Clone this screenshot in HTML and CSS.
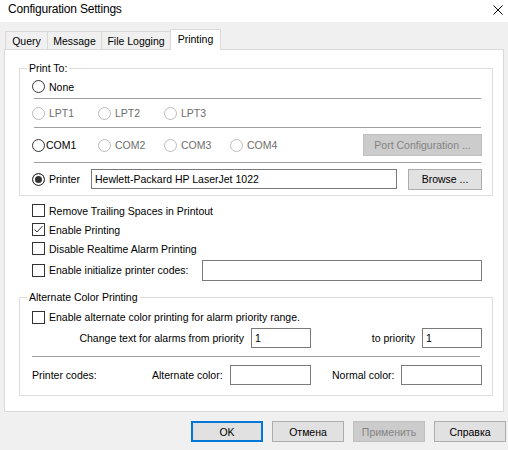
FILE: index.html
```html
<!DOCTYPE html>
<html lang="en">
<head>
  <meta charset="UTF-8">
  <meta name="viewport" content="width=device-width, initial-scale=1.0">
  <title>Configuration Settings</title>
  <link rel="stylesheet" href="styles.css">
</head>
<body>

  <!-- Title bar -->
  <div class="titlebar">
    <span class="title">Configuration Settings</span>
    <svg class="close" width="10" height="10" viewBox="0 0 10 10">
      <path d="M0.5 0.5L9.5 9.5M9.5 0.5L0.5 9.5" stroke="#000" stroke-width="1" fill="none"/>
    </svg>
  </div>

  <!-- Tabs -->
  <div class="tabs">
    <div class="tab tab-query">Query</div>
    <div class="tab tab-message">Message</div>
    <div class="tab tab-logging">File Logging</div>
    <div class="tab tab-printing active">Printing</div>
  </div>

  <div class="panel">

    <!-- Print To -->
    <fieldset class="group">
      <legend>Print To:</legend>

      <div class="row r-none">
        <label class="opt"><span class="radio"></span>None</label>
      </div>
      <div class="sep"></div>

      <div class="row r-lpt">
        <label class="opt off"><span class="radio"></span>LPT1</label>
        <label class="opt off"><span class="radio"></span>LPT2</label>
        <label class="opt off"><span class="radio"></span>LPT3</label>
      </div>
      <div class="sep"></div>

      <div class="row r-com">
        <label class="opt tight"><span class="radio"></span>COM1</label>
        <label class="opt off"><span class="radio"></span>COM2</label>
        <label class="opt off"><span class="radio"></span>COM3</label>
        <label class="opt off"><span class="radio"></span>COM4</label>
        <button class="btn btn-port" disabled>Port Configuration ...</button>
      </div>
      <div class="sep"></div>

      <div class="row r-printer">
        <label class="opt opt-printer"><span class="radio on"></span>Printer</label>
        <input class="field field-printer" type="text" value="Hewlett-Packard HP LaserJet 1022">
        <button class="btn btn-browse">Browse ...</button>
      </div>
    </fieldset>

    <!-- Options -->
    <div class="checks">
      <div class="row r-check">
        <label class="chk"><span class="box"></span>Remove Trailing Spaces in Printout</label>
      </div>
      <div class="row r-check">
        <label class="chk">
          <span class="box">
            <svg width="11" height="11" viewBox="0 0 11 11"><polyline points="1.5,5.5 4,8 9.5,2" fill="none" stroke="#333" stroke-width="1"/></svg>
          </span>Enable Printing
        </label>
      </div>
      <div class="row r-check">
        <label class="chk"><span class="box"></span>Disable Realtime Alarm Printing</label>
      </div>
      <div class="row r-init">
        <label class="chk"><span class="box"></span>Enable initialize printer codes:</label>
        <input class="field field-init" type="text" value="">
      </div>
    </div>

    <!-- Alternate Color Printing -->
    <fieldset class="group group-alt">
      <legend>Alternate Color Printing</legend>

      <div class="row r-alt">
        <label class="chk"><span class="box"></span>Enable alternate color printing for alarm priority range.</label>
      </div>

      <div class="row r-range">
        <span class="lbl lbl-from">Change text for alarms from priority</span>
        <input class="field field-num" type="text" value="1">
        <span class="lbl lbl-to">to priority</span>
        <input class="field field-num" type="text" value="1">
      </div>

      <div class="sep sep-alt"></div>

      <div class="row r-codes">
        <span class="lbl lbl-codes">Printer codes:</span>
        <span class="lbl lbl-alt">Alternate color:</span>
        <input class="field field-color" type="text" value="">
        <span class="lbl lbl-normal">Normal color:</span>
        <input class="field field-color" type="text" value="">
      </div>
    </fieldset>

  </div>

  <!-- Dialog buttons -->
  <div class="footer">
    <button class="btn btn-dlg btn-default">OK</button>
    <button class="btn btn-dlg">Отмена</button>
    <button class="btn btn-dlg" disabled>Применить</button>
    <button class="btn btn-dlg">Справка</button>
  </div>

</body>
</html>
```

FILE: styles.css
```css
* {
  margin: 0;
  padding: 0;
  box-sizing: border-box;
}

body {
  width: 508px;
  height: 450px;
  overflow: hidden;
  background-color: #f0f0f0;
  color: #000;
  font-family: "Liberation Sans", Arial, sans-serif;
  font-size: 10.5px;
}

/* Title bar */
.titlebar {
  height: 22px;
  background-color: #fff;
  display: flex;
  justify-content: space-between;
  padding: 0 5px 0 8px;
}

.title {
  font-size: 12px;
  line-height: 18px;
  letter-spacing: -0.2px;
}

.close {
  margin-top: 5px;
}

/* Tabs */
.tabs {
  height: 27px;
  display: flex;
  align-items: flex-end;
  padding-left: 5px;
}

.tab {
  height: 18px;
  border: 1px solid #d9d9d9;
  border-bottom: none;
  background-color: #f0f0f0;
  text-align: center;
  line-height: 18px;
  margin-left: -1px;
}

.tab-query { width: 43px; margin-left: 0; }
.tab-message { width: 55px; }
.tab-logging { width: 70px; }
.tab-printing { width: 51px; }

.tab.active {
  position: relative;
  height: 21px;
  margin-bottom: -1px;
  background-color: #fff;
  line-height: 19px;
}

/* Tab page */
.panel {
  width: 500px;
  height: 363px;
  margin-left: 4px;
  background-color: #fff;
  border: 1px solid #d9d9d9;
  padding: 12px 10px 0 14px;
}

.group {
  border: 1px solid #dcdcdc;
  padding: 0 10px 0 12px;
}

.group legend {
  line-height: 13px;
  padding: 0 2px;
  margin-left: -5px;
}

.row {
  display: flex;
  align-items: center;
}

.r-none { height: 23px; }
.r-lpt { height: 28px; }
.r-com { height: 34px; }
.r-printer { height: 32px; }

.sep {
  height: 1px;
  background-color: #a0a0a0;
  margin: 0 1px 0 2px;
}

/* Radio buttons */
.opt {
  display: flex;
  align-items: center;
  gap: 4px;
  width: 66px;
}

.opt.tight { gap: 1px; }
.opt.off { color: #6d6d6d; }
.opt-printer { width: 59px; }

.radio {
  flex: none;
  width: 13px;
  height: 13px;
  border: 1px solid #333;
  border-radius: 50%;
  background-color: #fff;
}

.opt.off .radio { border-color: #bcbcbc; }

.radio.on {
  background-color: #333;
  box-shadow: inset 0 0 0 2px #fff;
}

/* Check boxes */
.chk {
  display: flex;
  align-items: center;
  gap: 4px;
}

.box {
  flex: none;
  width: 13px;
  height: 13px;
  border: 1px solid #333;
  background-color: #fff;
}

.box svg { display: block; }

.checks {
  padding: 5px 11px 9px 13px;
}

.r-check { height: 19px; }
.r-init { height: 24px; }

/* Text fields */
.field {
  height: 20px;
  border: 1px solid #7a7a7a;
  background-color: #fff;
  padding: 0 3px;
  font-family: inherit;
  font-size: 10.5px;
  color: #000;
  outline: none;
}

.field-printer { width: 306px; }
.field-init { width: 280px; height: 21px; margin-left: auto; }
.field-num { width: 60px; margin-left: 7px; }
.field-color { width: 81px; }

/* Buttons */
.btn {
  height: 21px;
  border: 1px solid #adadad;
  background-color: #e1e1e1;
  font-family: inherit;
  font-size: 10.5px;
  color: #000;
}

.btn:disabled {
  background-color: #cccccc;
  border-color: #bfbfbf;
  color: #838383;
}

.btn-port {
  width: 119px;
  height: 22px;
  margin-left: auto;
}

.btn-browse {
  width: 74px;
  margin-left: auto;
}

/* Alternate color group */
.group-alt {
  margin-top: 0;
  padding-bottom: 10px;
}

.r-alt {
  height: 20px;
  margin-top: 3px;
}

.r-range { height: 21px; }

.lbl-from { width: 212px; text-align: right; }
.lbl-to { width: 104px; text-align: right; }

.sep-alt {
  margin: 8px 2px 0 0;
}

.r-codes {
  height: 20px;
  margin-top: 8px;
}

.lbl-codes { width: 120px; }
.lbl-alt { width: 78px; }
.lbl-normal { width: 69px; margin-left: 21px; }

/* Dialog buttons */
.footer {
  display: flex;
  justify-content: flex-end;
  gap: 9px;
  padding: 9px 2px 0 0;
}

.btn-dlg { width: 72px; }

.btn-default {
  border: 2px solid #0078d7;
}
```
